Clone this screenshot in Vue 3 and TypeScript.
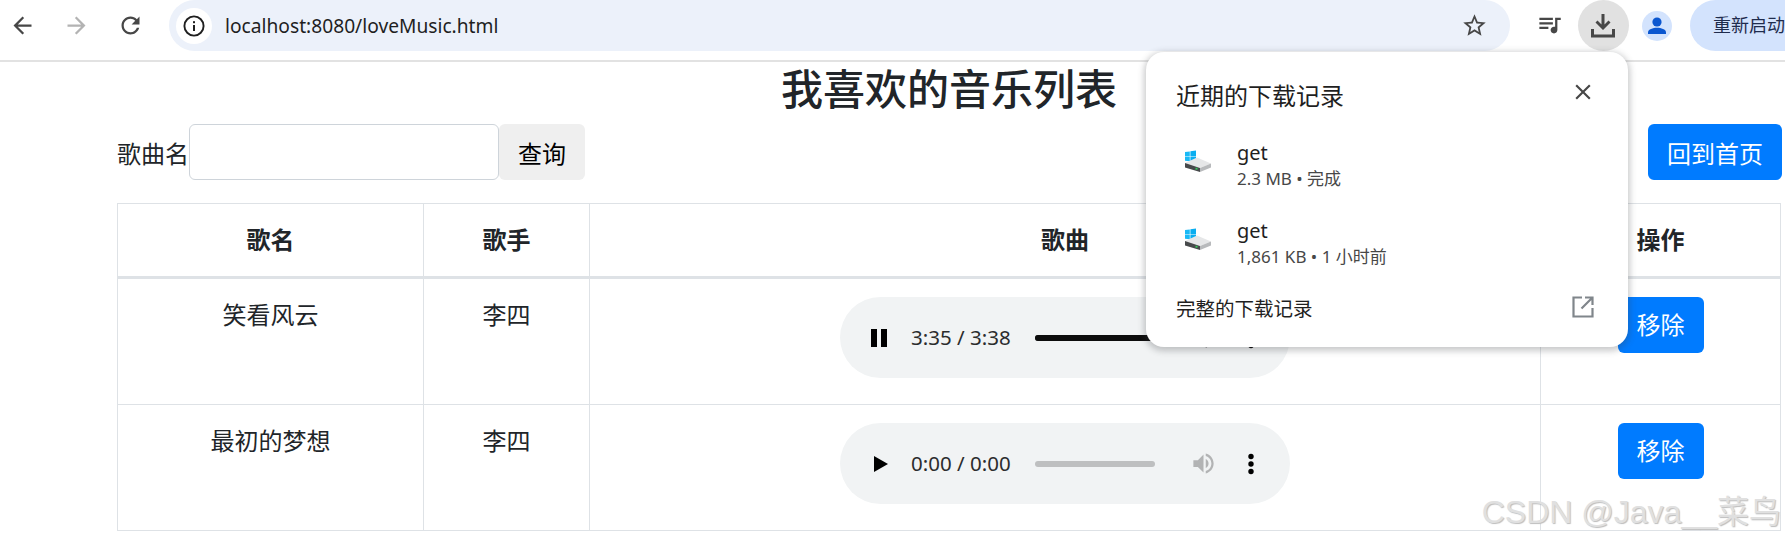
<template>
    <div class="page">
        <header class="browser-bar">
            <button class="nav-btn">
                <svg width="27" height="27" viewBox="0 0 24 24"><path fill="#474747" d="M20 11H7.83l5.59-5.59L12 4l-8 8 8 8 1.41-1.41L7.83 13H20v-2z" /></svg>
            </button>
            <button class="nav-btn">
                <svg width="27" height="27" viewBox="0 0 24 24"><path fill="#b3b3b3" d="M12 4l-1.41 1.41L16.17 11H4v2h12.17l-5.58 5.59L12 20l8-8z" /></svg>
            </button>
            <button class="nav-btn">
                <svg width="27" height="27" viewBox="0 0 24 24"><path fill="#474747" d="M17.65 6.35C16.2 4.9 14.21 4 12 4c-4.42 0-7.99 3.58-7.99 8s3.57 8 7.99 8c3.73 0 6.84-2.55 7.73-6h-2.08c-.82 2.33-3.04 4-5.65 4-3.31 0-6-2.69-6-6s2.69-6 6-6c1.66 0 3.14.69 4.22 1.78L13 11h7V4l-2.35 2.35z" /></svg>
            </button>
            <div class="omnibox">
                <span class="site-info">
                    <svg width="24" height="24" viewBox="0 0 24 24">
                        <circle cx="12" cy="12" r="9.6" fill="none" stroke="#1f1f1f" stroke-width="1.9" />
                        <rect x="11" y="11" width="2" height="6" fill="#1f1f1f" />
                        <rect x="11" y="7.2" width="2" height="2" fill="#1f1f1f" />
                    </svg>
                </span>
                <span class="url">localhost:8080/loveMusic.html</span>
                <svg class="star" width="27" height="27" viewBox="0 0 24 24"><path fill="#474747" d="M22 9.24l-7.19-.62L12 2 9.19 8.63 2 9.24l5.46 4.73L5.82 21 12 17.27 18.18 21l-1.63-7.03L22 9.24zM12 15.4l-3.76 2.27 1-4.28-3.32-2.88 4.38-.38L12 6.1l1.71 4.04 4.38.38-3.32 2.88 1 4.28L12 15.4z" /></svg>
            </div>
            <button class="nav-btn">
                <svg width="27" height="27" viewBox="0 0 24 24"><path fill="#474747" d="M15 5H3v2h12V5zm0 4H3v2h12V9zM3 15h8v-2H3v2zM17 5v8.18c-.31-.11-.65-.18-1-.18-1.66 0-3 1.34-3 3s1.34 3 3 3 3-1.34 3-3V7h3V5h-5z" /></svg>
            </button>
            <button class="nav-btn download-btn">
                <span class="download-circle">
                    <svg width="24" height="24" viewBox="0 0 24 24"><path fill="#474747" d="M10.500 0h3v10.500l4-4 2 2.100L12 16 4.500 8.600l2-2.100 4 4z" /><path fill="#474747" d="M0 15h3v5.500h18V15h3v8.500H0z" /></svg>
                </span>
            </button>
            <button class="nav-btn">
                <svg width="30" height="30" viewBox="0 0 30 30">
                    <circle cx="15" cy="15" r="15" fill="#d3e3fd" />
                    <circle cx="15" cy="11" r="4.6" fill="#0b57d0" />
                    <path fill="#0b57d0" d="M6 23v-1.6c0-3 5-4.6 9-4.6s9 1.6 9 4.6V23z" />
                </svg>
            </button>
            <div class="restart-pill">重新启动</div>
        </header>

        <main class="content">
            <h3 class="title">我喜欢的音乐列表</h3>
            <div class="search-row">
                <label class="search-label">歌曲名</label>
                <input class="search-input" type="text" />
                <button class="query-btn">查询</button>
                <button class="blue-btn home-btn">回到首页</button>
            </div>
            <table class="music-table">
                <thead>
                    <tr>
                        <th class="col-name">歌名</th>
                        <th class="col-singer">歌手</th>
                        <th>歌曲</th>
                        <th class="col-action">操作</th>
                    </tr>
                </thead>
                <tbody>
                    <tr v-for="song in songs" :key="song.name">
                        <td>{{ song.name }}</td>
                        <td>{{ song.singer }}</td>
                        <td>
                            <div class="player">
                                <svg v-if="song.playing" width="18" height="18" viewBox="0 0 18 18" class="play-icon">
                                    <rect x="1" y="0" width="6" height="18" fill="#000" />
                                    <rect x="11" y="0" width="6" height="18" fill="#000" />
                                </svg>
                                <svg v-else width="18" height="18" viewBox="0 0 18 18" class="play-icon">
                                    <path d="M4 1l14 8-14 8z" fill="#000" />
                                </svg>
                                <span class="time">{{ song.time }}</span>
                                <span class="track" :class="{ loaded: song.playing }">
                                    <span class="track-fill" :style="{ width: song.progress + '%' }"></span>
                                </span>
                                <svg class="volume" width="27" height="27" viewBox="0 0 24 24">
                                    <path d="M3 9v6h4l5 5V4L7 9z" :fill="song.playing ? '#000' : '#b2b3b4'" />
                                    <path d="M14 8v8c1.5-.7 2.5-2.2 2.5-4s-1-3.300-2.500-4zM14 3.200v2.100c2.900.9 5 3.500 5 6.700s-2.100 5.800-5 6.700v2.100c4-.9 7-4.500 7-8.800s-3-7.900-7-8.800z" :fill="song.playing ? '#000' : '#b2b3b4'" />
                                </svg>
                                <svg class="dots" width="8" height="24" viewBox="0 0 8 24">
                                    <circle cx="4" cy="4.500" r="2.700" fill="#000" />
                                    <circle cx="4" cy="12" r="2.700" fill="#000" />
                                    <circle cx="4" cy="19.500" r="2.700" fill="#000" />
                                </svg>
                            </div>
                        </td>
                        <td><button class="blue-btn">移除</button></td>
                    </tr>
                </tbody>
            </table>
        </main>

        <!-- 下载记录弹窗 -->
        <aside class="download-popup">
            <div class="popup-head">
                <span class="popup-title">近期的下载记录</span>
                <svg class="popup-close" width="26" height="26" viewBox="0 0 24 24"><path fill="#474747" d="M19 6.410L17.590 5 12 10.590 6.410 5 5 6.410 10.590 12 5 17.590 6.410 19 12 13.410 17.590 19 19 17.590 13.410 12z" /></svg>
            </div>
            <div v-for="item in downloads" :key="item.meta" class="download-item">
                <svg class="drive-icon" width="28" height="22" viewBox="0 0 28 22">
                    <path d="M1 2l4.800-.6V6H1z" fill="#19b9f6" />
                    <path d="M6.400 1.300L12 .5V6H6.400z" fill="#0aaef0" />
                    <path d="M1 6.600h4.800v4.600L1 10.700z" fill="#19b9f6" />
                    <path d="M6.400 6.600H12v5.500l-5.600-.8z" fill="#0aaef0" />
                    <path d="M13 7.500l14 6-11 4.500L1 13z" fill="#e6e7e8" />
                    <path d="M1 13l15 5v4L1 17.500z" fill="#47494b" />
                    <path d="M16 18l11-4.500v4L16 22z" fill="#b8babc" />
                    <rect x="11.500" y="17.800" width="2" height="1.800" fill="#35c95a" />
                </svg>
                <div class="download-text">
                    <div class="file-name">get</div>
                    <div class="file-meta">{{ item.meta }}</div>
                </div>
            </div>
            <div class="popup-foot">
                <span>完整的下载记录</span>
                <svg width="24" height="24" viewBox="0 0 24 24" fill="none" stroke="#80868b" stroke-width="2.200">
                    <path d="M11 2.500H2.500v19h19V13" />
                    <path d="M21 3L10.500 13.500M14 2.500h7.500V10" />
                </svg>
            </div>
        </aside>

        <div class="watermark">CSDN @Java__菜鸟</div>
    </div>
</template>

<script setup lang="ts">
interface Song {
    name: string
    singer: string
    time: string
    progress: number
    playing: boolean
}

const songs: Song[] = [
    { name: '笑看风云', singer: '李四', time: '3:35 / 3:38', progress: 98, playing: true },
    { name: '最初的梦想', singer: '李四', time: '0:00 / 0:00', progress: 0, playing: false }
]

const downloads = [
    { meta: '2.3 MB • 完成' },
    { meta: '1,861 KB • 1 小时前' }
]
</script>

<style scoped>
.page {
    position: relative;
    width: 1785px;
    height: 544px;
    overflow: hidden;
    background: #ffffff;
    color: #212529;
    font-family: "Noto Sans", "Noto Sans CJK SC", sans-serif;
}

/* 浏览器工具栏 */
.browser-bar {
    display: flex;
    align-items: flex-start;
    height: 60px;
    margin-left: -5px;
    border-bottom: 2px solid #e2e2e2;
}

.nav-btn {
    flex: 0 0 54px;
    display: flex;
    align-items: center;
    justify-content: center;
    height: 51px;
    padding: 0;
    border: none;
    background: none;
}

.omnibox {
    flex: 1;
    display: flex;
    align-items: center;
    height: 51px;
    margin: 0 12px;
    padding: 0 22px 0 7px;
    border-radius: 26px;
    background: #ecf1fa;
}

.site-info {
    display: flex;
    align-items: center;
    justify-content: center;
    width: 36px;
    height: 36px;
    border-radius: 50%;
    background: #ffffff;
}

.url {
    flex: 1;
    margin-left: 13px;
    font-size: 19.200px;
    color: #1f1f1f;
}

.download-circle {
    display: flex;
    align-items: center;
    justify-content: center;
    width: 51px;
    height: 51px;
    border-radius: 50%;
    background: #e1e1e1;
}

.restart-pill {
    flex: 0 0 95px;
    height: 51px;
    margin-left: 6px;
    padding-left: 23px;
    box-sizing: border-box;
    border-radius: 26px 0 0 26px;
    background: #d3e3fd;
    color: #1f2c4d;
    font-size: 18px;
    line-height: 51px;
    white-space: nowrap;
    overflow: hidden;
}

/* 页面内容 */
.content {
    padding: 0 4px 0 117px;
}

.title {
    margin: 0 0 8px;
    font-size: 42px;
    font-weight: 500;
    line-height: 54px;
    text-align: center;
}

.search-row {
    display: flex;
    align-items: center;
    height: 56px;
    margin-bottom: 23px;
    font-size: 24px;
}

.search-input {
    width: 310px;
    height: 56px;
    box-sizing: border-box;
    border: 1.5px solid #ced4da;
    border-radius: 6px;
}

.query-btn {
    width: 86px;
    height: 56px;
    border: none;
    border-radius: 6px;
    background: #efefef;
    color: #000000;
    font: inherit;
}

.blue-btn {
    width: 86px;
    height: 56px;
    padding: 0;
    border: none;
    border-radius: 6px;
    background: #007bff;
    color: #ffffff;
    font: inherit;
    font-size: 24px;
}

.home-btn {
    width: 134px;
    margin: 0 -1px 0 auto;
}

.music-table {
    width: 100%;
    border-collapse: collapse;
    table-layout: fixed;
    font-size: 24px;
    line-height: 36px;
    text-align: center;
}

.music-table th,
.music-table td {
    padding: 18px;
    border: 1.5px solid #dee2e6;
    vertical-align: top;
    box-sizing: border-box;
}

.music-table thead th {
    border-bottom-width: 3px;
    font-weight: 700;
}

.col-name {
    width: 306px;
}

.col-singer {
    width: 166px;
}

.col-action {
    width: 240px;
}

.player {
    display: flex;
    align-items: center;
    width: 450px;
    height: 81px;
    margin: 0 auto 8px;
    padding: 0 30px;
    box-sizing: border-box;
    border-radius: 41px;
    background: #f1f3f4;
}

.play-icon {
    flex: none;
}

.time {
    margin-left: 23px;
    font-size: 20.500px;
    line-height: 1;
    color: #2b2c2d;
    white-space: nowrap;
}

.track {
    flex: none;
    width: 120px;
    height: 6px;
    margin-left: 24px;
    border-radius: 3px;
    background: #bebfc0;
    overflow: hidden;
}

.track.loaded {
    background: #5f5f5f;
}

.track-fill {
    display: block;
    height: 100%;
    background: #0c0c0c;
}

.volume {
    flex: none;
    margin-left: 35px;
}

.dots {
    flex: none;
    margin-left: 30px;
}

/* 下载记录弹窗 */
.download-popup {
    position: absolute;
    top: 52px;
    left: 1146px;
    width: 482px;
    height: 295px;
    box-sizing: border-box;
    padding: 0 30px;
    border-radius: 18px;
    background: #ffffff;
    box-shadow: 0 2px 6px 2px rgba(60, 64, 67, 0.28);
}

.popup-head {
    display: flex;
    align-items: center;
    justify-content: space-between;
    height: 75px;
}

.popup-title {
    margin-top: 9px;
    font-size: 24px;
    color: #1f1f1f;
}

.popup-close {
    margin: 5px 2px 0 0;
}

.download-item {
    display: flex;
    align-items: center;
    height: 78px;
}

.drive-icon {
    flex: none;
    margin: 0 0 10px 8px;
}

.download-text {
    margin-left: 25px;
}

.file-name {
    font-size: 20px;
    line-height: 26px;
    color: #1f1f1f;
}

.file-meta {
    font-size: 17px;
    line-height: 26px;
    color: #474747;
}

.popup-foot {
    display: flex;
    align-items: center;
    justify-content: space-between;
    height: 44px;
    margin: 2px 3px 0 0;
    font-size: 19.500px;
    color: #1f1f1f;
}

.watermark {
    position: absolute;
    right: 4px;
    bottom: 14px;
    font-family: "Liberation Sans", "Noto Sans CJK SC", sans-serif;
    font-size: 32px;
    line-height: 36px;
    color: #e0e0e0;
    text-shadow: 1px 1px 1px #bdbdbd;
    white-space: nowrap;
}
</style>

<style>
html,
body {
    background: #ffffff;
}
</style>
